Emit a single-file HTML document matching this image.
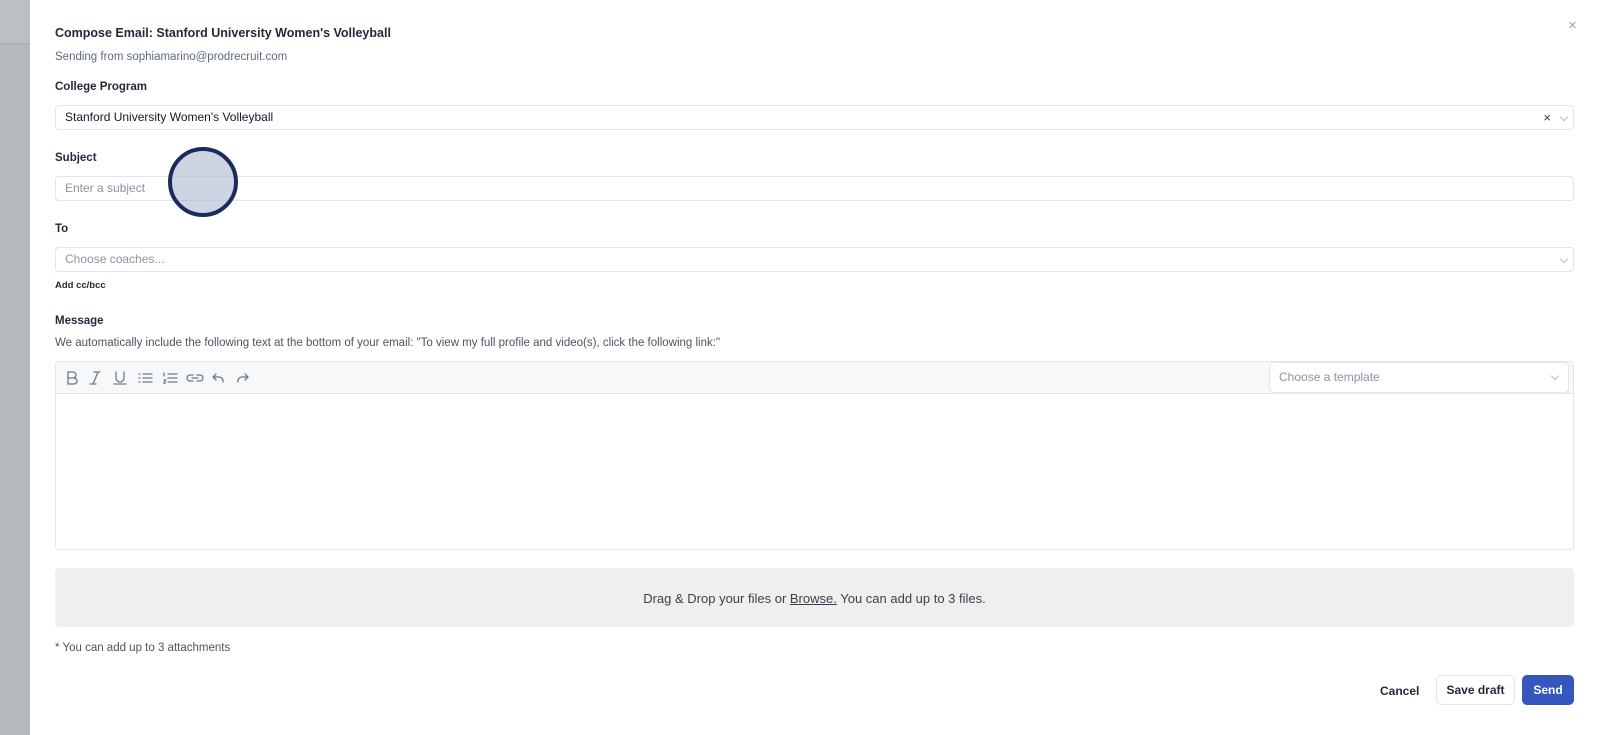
<!DOCTYPE html>
<html><head><style>
*{box-sizing:border-box;margin:0;padding:0}
body{width:1600px;height:735px;overflow:hidden;background:#fff;font-family:"Liberation Sans",sans-serif;position:relative;color:#111827}
.abs{position:absolute}
.lbl{position:absolute;left:55px;font-size:11.5px;font-weight:bold;color:#1f2937}
.inp{position:absolute;left:55px;width:1519px;height:25px;border:1px solid #e2e6ea;border-radius:4px;font-size:12px;padding-left:9px;line-height:23px}
.ph{color:#8a94a3}
.chev{position:absolute;right:6px;top:8px;width:6px;height:6px;border-right:1px solid #b8bec6;border-bottom:1px solid #b8bec6;transform:rotate(45deg)}
</style></head><body>
<div class="abs" style="left:0;top:0;width:30px;height:43px;background:#bdc0c3"></div>
<div class="abs" style="left:0;top:43px;width:30px;height:1px;background:#a9adb1"></div>
<div class="abs" style="left:0;top:44px;width:30px;height:691px;background:#b6b9bc"></div>
<div class="abs" style="left:1568px;top:17px;font-size:15px;color:#9ca3af">×</div>
<div class="abs" style="left:55px;top:26px;font-size:12.5px;font-weight:bold;color:#1f2937">Compose Email: Stanford University Women's Volleyball</div>
<div class="abs" style="left:55px;top:51px;font-size:11.5px;color:#5b6b80">Sending from sophiamarino@prodrecruit.com</div>
<div class="lbl" style="top:81px">College Program</div>
<div class="inp" style="top:105px">Stanford University Women's Volleyball<span class="abs" style="right:22px;top:0;font-size:13px;color:#374151">×</span><div class="chev"></div></div>
<div class="lbl" style="top:152px">Subject</div>
<div class="inp ph" style="top:176px">Enter a subject</div>
<div class="lbl" style="top:223px">To</div>
<div class="inp ph" style="top:247px">Choose coaches...<div class="chev"></div></div>
<div class="abs" style="left:55px;top:280px;font-size:9.5px;font-weight:bold;color:#1f2937">Add cc/bcc</div>
<div class="lbl" style="top:315px">Message</div>
<div class="abs" style="left:55px;top:337px;font-size:11.5px;color:#4b5563">We automatically include the following text at the bottom of your email: "To view my full profile and video(s), click the following link:"</div>
<div class="abs" style="left:55px;top:361px;width:1519px;height:189px;border:1px solid #e2e6ea;border-radius:4px;overflow:hidden">
 <div style="height:32px;background:#f6f8f9;border-bottom:1px solid #e2e6ea;position:relative">
  <svg class="abs" style="left:8px;top:8px" width="200" height="16" viewBox="0 0 200 16" fill="none" stroke="#6b7a8c" stroke-width="1.3" stroke-linecap="round">
   <path d="M4 2h5a3 3 0 0 1 0 6H4zM4 8h6a3 3 0 0 1 0 6H4z"/>
   <path d="M30 2h6M26 14h6M34 2l-5 12"/>
   <path d="M52 2v6a4 4 0 0 0 8 0V2M50 14h12"/>
   <path d="M79 4h9M79 8h9M79 12h9M75 4h1M75 8h1M75 12h1"/>
   <path d="M104 4h9M104 8h9M104 12h9M100 3v3M100 10h1.5l-1.5 3h1.5"/>
   <path d="M129 5h-3a3 3 0 0 0 0 6h3M133 5h3a3 3 0 0 1 0 6h-3M128 8h6"/>
   <path d="M152 4l-3 3 3 3M149 7h6a4 4 0 0 1 4 4v1"/>
   <path d="M181 4l3 3-3 3M184 7h-6a4 4 0 0 0-4 4v1"/>
  </svg>
  <div class="abs ph" style="left:1213px;top:0;width:300px;height:31px;background:#fff;border:1px solid #e2e6ea;border-radius:5px;font-size:12px;padding-left:9px;line-height:29px">Choose a template<div class="chev" style="top:10px;right:10px"></div></div>
 </div>
</div>
<div class="abs" style="left:55px;top:568px;width:1519px;height:59px;background:#f0efed;border-radius:4px;text-align:center;line-height:61px;font-size:13px;color:#374151">Drag &amp; Drop your files or <u>Browse.</u> You can add up to 3 files.</div>
<div class="abs" style="left:55px;top:642px;font-size:11.5px;color:#4b5563">* You can add up to 3 attachments</div>
<div class="abs" style="left:1380px;top:684px;font-size:12px;font-weight:bold;color:#1f2937">Cancel</div>
<div class="abs" style="left:1436px;top:675px;width:79px;height:30px;border:1px solid #e2e6ea;border-radius:5px;font-size:12px;font-weight:bold;text-align:center;line-height:28px;color:#1f2937">Save draft</div>
<div class="abs" style="left:1522px;top:675px;width:52px;height:30px;background:#3557bd;border-radius:5px;font-size:12px;font-weight:bold;text-align:center;line-height:30px;color:#fff">Send</div>
<div class="abs" style="left:168px;top:147px;width:70px;height:70px;border-radius:50%;border:4px solid #1a2c5b;background:rgba(160,170,200,0.5)"></div>
</body></html>
